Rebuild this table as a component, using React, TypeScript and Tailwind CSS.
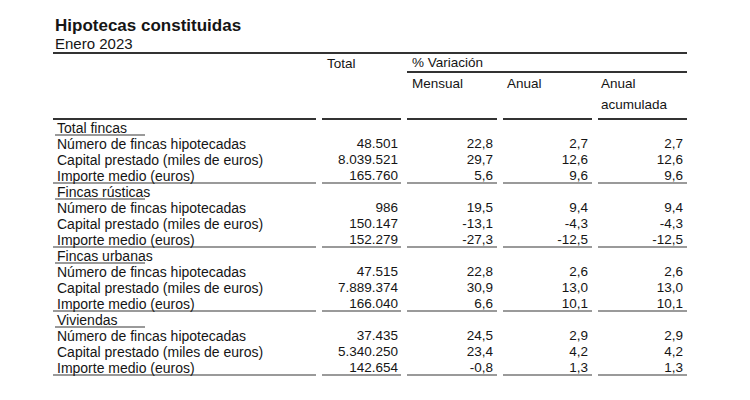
import React from "react";

type Row = { label: string; v: [string, string, string, string]; last?: boolean };
type Section = { title: string; rows: Row[] };

const sections: Section[] = [
  {
    title: "Total fincas",
    rows: [
      { label: "Número de fincas hipotecadas", v: ["48.501", "22,8", "2,7", "2,7"] },
      { label: "Capital prestado (miles de euros)", v: ["8.039.521", "29,7", "12,6", "12,6"] },
      { label: "Importe medio (euros)", v: ["165.760", "5,6", "9,6", "9,6"], last: true },
    ],
  },
  {
    title: "Fincas rústicas",
    rows: [
      { label: "Número de fincas hipotecadas", v: ["986", "19,5", "9,4", "9,4"] },
      { label: "Capital prestado (miles de euros)", v: ["150.147", "-13,1", "-4,3", "-4,3"] },
      { label: "Importe medio (euros)", v: ["152.279", "-27,3", "-12,5", "-12,5"], last: true },
    ],
  },
  {
    title: "Fincas urbanas",
    rows: [
      { label: "Número de fincas hipotecadas", v: ["47.515", "22,8", "2,6", "2,6"] },
      { label: "Capital prestado (miles de euros)", v: ["7.889.374", "30,9", "13,0", "13,0"] },
      { label: "Importe medio (euros)", v: ["166.040", "6,6", "10,1", "10,1"], last: true },
    ],
  },
  {
    title: "Viviendas",
    rows: [
      { label: "Número de fincas hipotecadas", v: ["37.435", "24,5", "2,9", "2,9"] },
      { label: "Capital prestado (miles de euros)", v: ["5.340.250", "23,4", "4,2", "4,2"] },
      { label: "Importe medio (euros)", v: ["142.654", "-0,8", "1,3", "1,3"], last: true },
    ],
  },
];

const grid = "grid grid-cols-[263px_79px_90px_89px_89px] gap-x-[6px]";

function DataRow({ row }: { row: Row }) {
  const line = row.last ? "border-b-2 border-[#9a9a9a]" : "";
  return (
    <div className={`${grid} h-[16px]`}>
      <div className={`h-[16px] pl-1 text-[14px] leading-[16px] whitespace-nowrap ${line}`}>{row.label}</div>
      {row.v.map((x, i) => (
        <div
          key={i}
          className={`h-[16px] text-right text-[13.5px] leading-[16px] ${i === 0 ? "pr-[3px]" : "pr-1"} ${line}`}
        >
          {x}
        </div>
      ))}
    </div>
  );
}

export default function App() {
  return (
    <div
      className="w-[750px] h-[400px] bg-white text-[#151515] pl-[53px] pt-[16px]"
      style={{ fontFamily: '"Liberation Sans", Arial, sans-serif' }}
    >
      <div className="pl-[2px]">
        <div className="text-[17px] font-bold leading-[20px]">Hipotecas constituidas</div>
        <div className="text-[15px] leading-[16px]">Enero 2023</div>
      </div>
      <div className="w-[634px] border-t-2 border-[#333]">
        {/* header row 1 */}
        <div className={`${grid} h-[19px]`}>
          <div />
          <div className="pl-[5px] text-[13.5px] leading-[19px]">Total</div>
          <div className="col-span-3 h-[19px] border-b-2 border-[#333] pl-[5px] text-[13.5px] leading-[18px]">
            % Variación
          </div>
        </div>
        {/* header row 2 */}
        <div className={`${grid} h-[47px]`}>
          <div className="border-b-2 border-[#333]" />
          <div className="border-b-2 border-[#333]" />
          <div className="border-b-2 border-[#333] pl-[5px] text-[13.5px] leading-[21px]">Mensual</div>
          <div className="border-b-2 border-[#333] pl-[4px] text-[13.5px] leading-[21px]">Anual</div>
          <div className="border-b-2 border-[#333] pl-[3px] text-[13.5px] leading-[21px]">
            Anual
            <br />
            acumulada
          </div>
        </div>
        {sections.map((s) => (
          <div key={s.title}>
            <div className="h-[16px] pl-[2px]">
              <div className="w-[90px] h-[16px] border-b-2 border-[#9a9a9a] pl-[2px] text-[14px] leading-[16px] whitespace-nowrap">
                {s.title}
              </div>
            </div>
            {s.rows.map((r) => (
              <DataRow key={r.label} row={r} />
            ))}
          </div>
        ))}
      </div>
    </div>
  );
}
